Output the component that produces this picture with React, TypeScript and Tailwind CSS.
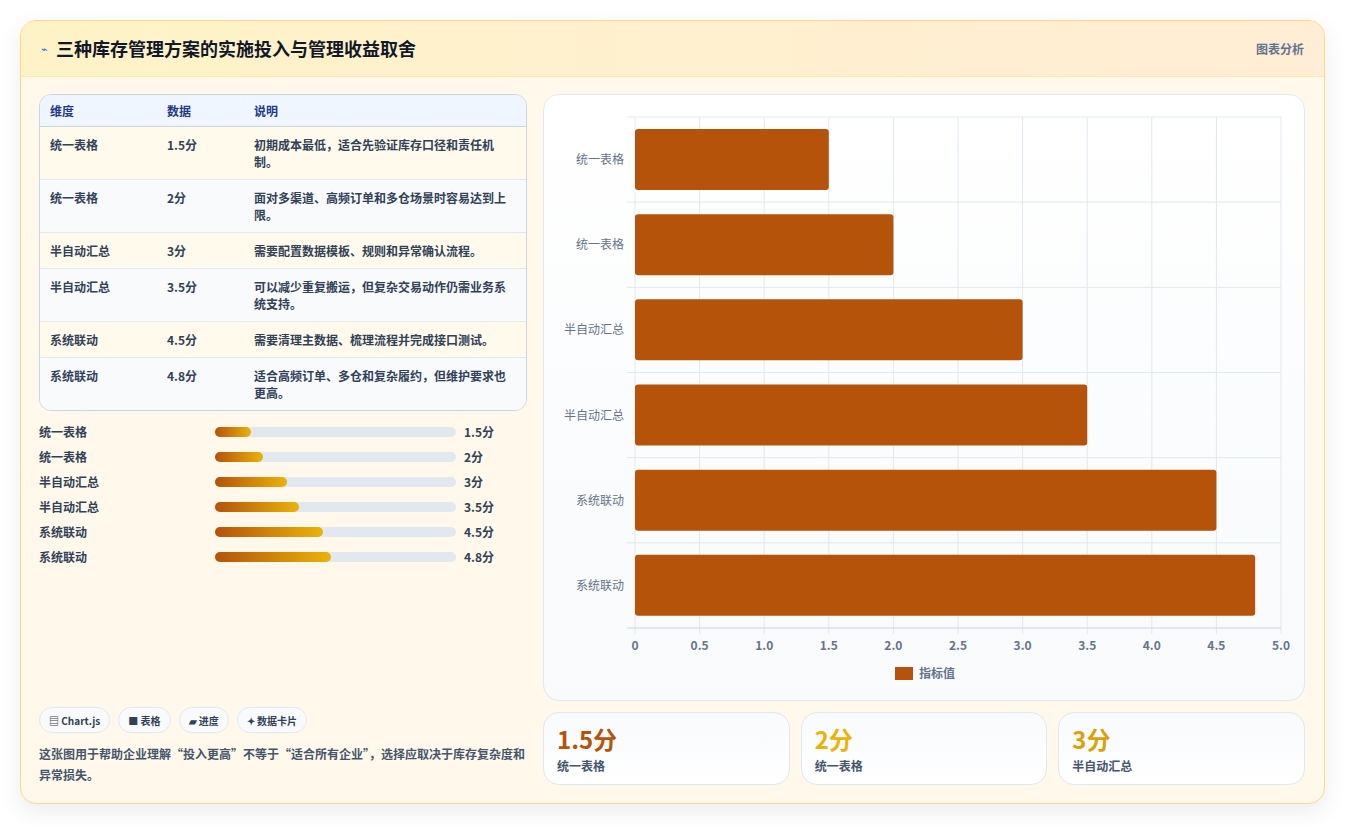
const rows = [
  { name: "统一表格", v: 1.5, note: "初期成本最低，适合先验证库存口径和责任机制。" },
  { name: "统一表格", v: 2, note: "面对多渠道、高频订单和多仓场景时容易达到上限。" },
  { name: "半自动汇总", v: 3, note: "需要配置数据模板、规则和异常确认流程。" },
  { name: "半自动汇总", v: 3.5, note: "可以减少重复搬运，但复杂交易动作仍需业务系统支持。" },
  { name: "系统联动", v: 4.5, note: "需要清理主数据、梳理流程并完成接口测试。" },
  { name: "系统联动", v: 4.8, note: "适合高频订单、多仓和复杂履约，但维护要求也更高。" },
];

const font = { fontFamily: '"Noto Sans CJK SC", "Noto Sans", sans-serif' };

function Chart() {
  const L = 91, R = 737, T = 22, B = 533;
  const sx = (v: number) => L + ((R - L) * v) / 5;
  const band = (B - T) / 6;
  const ticks = [0, 0.5, 1, 1.5, 2, 2.5, 3, 3.5, 4, 4.5, 5];
  return (
    <svg width="762" height="607" viewBox="0 0 762 607" style={font}>
      {ticks.map((t) => (
        <line key={t} x1={sx(t)} x2={sx(t)} y1={T} y2={B + 6} stroke="#e2e8f0" />
      ))}
      {rows.map((_, i) => (
        <line key={i} x1={L - 8} x2={R} y1={T + band * i} y2={T + band * i} stroke="#e2e8f0" />
      ))}
      <line x1={L - 8} x2={R} y1={B} y2={B} stroke="#cbd5e1" />
      {rows.map((r, i) => {
        const y = T + band * i + 12;
        return (
          <g key={i}>
            <rect x={L} y={y} width={sx(r.v) - L} height={61} rx={3} fill="#b45309" />
            <text x={80} y={y + 35} textAnchor="end" fontSize="12" fill="#64748b">{r.name}</text>
          </g>
        );
      })}
      {ticks.map((t) => (
        <text key={t} x={sx(t)} y={555} textAnchor="middle" fontSize="12" fontWeight="bold" fill="#64748b">
          {t === 0 ? "0" : t.toFixed(1)}
        </text>
      ))}
      <rect x={351} y={572} width={18} height={13} fill="#b45309" />
      <text x={375} y={583} fontSize="12" fontWeight="bold" fill="#64748b">指标值</text>
    </svg>
  );
}

export default function App() {
  return (
    <div className="bg-white min-h-[825px] p-5" style={font}>
      <div className="w-[1305px] h-[784px] rounded-2xl border border-[#fcd987] bg-[#fff8eb] shadow-[0_8px_24px_rgba(0,0,0,0.08)] overflow-hidden flex flex-col">
        <div className="h-[56px] flex items-center justify-between px-5 bg-gradient-to-r from-[#fef3c7] to-[#ffedd5] border-b border-[#fde7b0]">
          <div className="flex items-center gap-2">
            <span className="text-[11px] text-blue-600">⌁</span>
            <h1 className="text-[18px] font-bold text-[#111827]">三种库存管理方案的实施投入与管理收益取舍</h1>
          </div>
          <span className="text-[12px] font-bold text-slate-500">图表分析</span>
        </div>
        <div className="flex gap-4 px-[18px] pt-[17px] flex-1">
          <div className="w-[488px] flex flex-col">
            <div className="rounded-xl border border-slate-300 overflow-hidden text-[12px]">
              <div className="grid grid-cols-[117px_87px_1fr] h-[32px] items-center bg-[#eff6ff] text-[#1e3a8a] font-bold px-[10px] border-b border-slate-300">
                <span>维度</span><span>数据</span><span>说明</span>
              </div>
              {rows.map((r, i) => (
                <div key={i} className={`grid grid-cols-[117px_87px_1fr] px-[10px] py-[9px] leading-[17px] font-bold text-slate-700 border-b border-slate-200 last:border-b-0 ${i % 2 === 0 ? "bg-[#fffaeb]" : "bg-[#f8fafc]"}`}>
                  <span>{r.name}</span><span>{r.v}分</span><span className="pr-1">{r.note}</span>
                </div>
              ))}
            </div>
            <div className="mt-[12px] flex flex-col gap-[7px]">
              {rows.map((r, i) => (
                <div key={i} className="flex items-center h-[18px] text-[12px] font-bold text-slate-700">
                  <span className="w-[176px]">{r.name}</span>
                  <div className="w-[241px] h-[10px] rounded-full bg-[#e2e8f0]">
                    <div className="h-full rounded-full bg-gradient-to-r from-[#b45309] to-[#eab308]" style={{ width: `${r.v * 10}%` }} />
                  </div>
                  <span className="ml-2">{r.v}分</span>
                </div>
              ))}
            </div>
            <div className="mt-auto pb-[18px]">
              <div className="flex gap-2 text-[10px] font-bold text-slate-700">
                {["▤ Chart.js", "■ 表格", "▰ 进度", "✦ 数据卡片"].map((p) => (
                  <span key={p} className="h-[26px] px-[9px] flex items-center rounded-full border border-slate-200 bg-[#f8fafc]">{p}</span>
                ))}
              </div>
              <p className="mt-[10px] text-[12px] leading-[21px] font-bold text-slate-600">这张图用于帮助企业理解“投入更高”不等于“适合所有企业”，选择应取决于库存复杂度和异常损失。</p>
            </div>
          </div>
          <div className="w-[762px] flex flex-col">
            <div className="h-[607px] rounded-2xl border border-slate-200 bg-gradient-to-b from-white to-[#f8fafc]">
              <Chart />
            </div>
            <div className="mt-[11px] grid grid-cols-3 gap-[11px]">
              {[["1.5分", "text-[#b45309]"], ["2分", "text-[#eab308]"], ["3分", "text-[#dba10a]"]].map(([v, c], i) => (
                <div key={i} className="h-[73px] rounded-2xl border border-slate-200 bg-gradient-to-b from-[#f8fafc] to-white px-[13px] pt-[10px]">
                  <div className={`text-[24px] font-bold leading-[32px] ${c}`}>{v}</div>
                  <div className="text-[12px] font-bold text-slate-600 mt-[2px]">{rows[i * 2 === 4 ? 2 : i].name}</div>
                </div>
              ))}
            </div>
          </div>
        </div>
      </div>
    </div>
  );
}
